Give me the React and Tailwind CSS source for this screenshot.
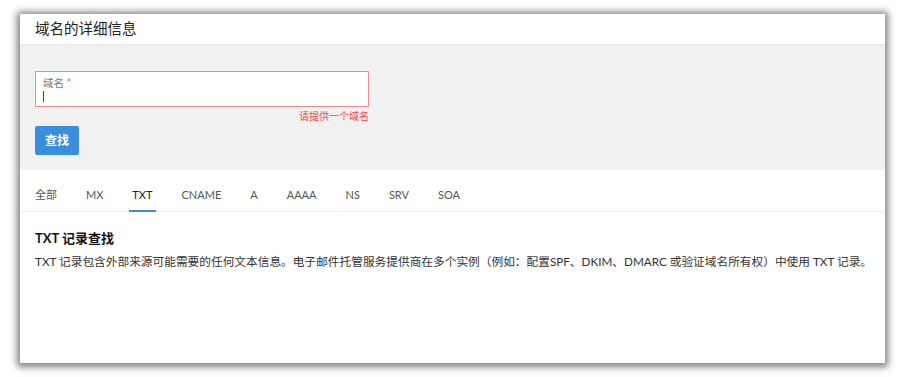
const tabs = ['全部', 'MX', 'TXT', 'CNAME', 'A', 'AAAA', 'NS', 'SRV', 'SOA'];

const font = { fontFamily: 'Lato, "Noto Sans CJK SC", sans-serif' };

export default function App() {
  return (
    <div className="w-[905px] h-[377px] bg-white pt-[14px] pl-[20px]" style={font}>
      <div className="w-[865px] h-[349px] bg-white shadow-[0_1px_7px_3px_rgba(0,0,0,0.5)] flex flex-col">
        {/* Header */}
        <div className="h-[31px] flex items-center px-[15px] border-b border-[#e6e6e6]">
          <h1 className="text-[14.5px] text-[#222]">域名的详细信息</h1>
        </div>

        {/* Lookup form */}
        <div className="bg-[#f1f1f1] pt-[26px] pb-[15px] px-[15px]">
          <div className="w-[334px]">
            <div className="h-[36px] bg-white border border-[#f08c8c] px-[7px] pt-[5px]">
              <div className="text-[10.5px] leading-[12px] text-[#777]">
                域名<span className="text-[#f05a5a]"> *</span>
              </div>
              <div className="w-px h-[11px] bg-[#444] mt-[2px]"></div>
            </div>
            <div className="text-right text-[10px] leading-[19px] text-[#f04a4a]">请提供一个域名</div>
          </div>
          <button className="w-[44px] h-[29px] rounded-[2px] bg-[#3a8ede] text-white text-[12px] font-bold">
            查找
          </button>
        </div>

        {/* Tabs */}
        <div className="h-[42px] flex items-stretch gap-[23px] px-[12px] border-b border-[#f0f0f0]">
          {tabs.map((t) => (
            <div
              key={t}
              className={`relative flex items-center pt-[9px] px-[3px] text-[11px] ${t === 'TXT' ? 'text-[#222]' : 'text-[#555]'}`}
            >
              {t}
              {t === 'TXT' && (
                <div className="absolute left-0 right-0 bottom-[-1px] h-[2px] bg-[#3a8ede]"></div>
              )}
            </div>
          ))}
        </div>

        {/* Content */}
        <div className="px-[15px] pt-[16px]">
          <h2 className="text-[13px] font-bold text-[#111] leading-[20px]">TXT 记录查找</h2>
          <p className="text-[11.7px] text-[#333] leading-[20px] mt-[3px] whitespace-nowrap">
            TXT 记录包含外部来源可能需要的任何文本信息。电子邮件托管服务提供商在多个实例（例如：配置SPF、DKIM、DMARC 或验证域名所有权）中使用 TXT 记录。
          </p>
        </div>
      </div>
    </div>
  );
}
